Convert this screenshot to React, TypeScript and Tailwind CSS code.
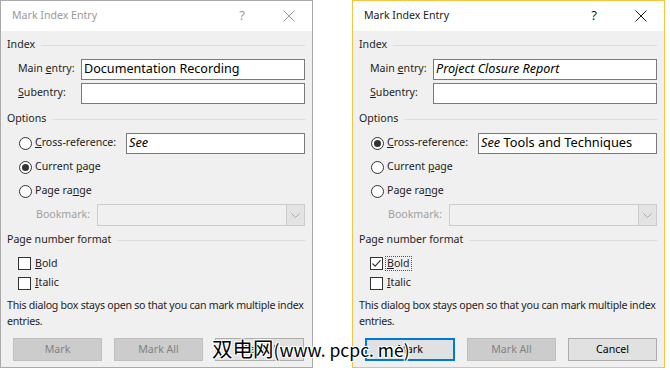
import type { ReactNode } from 'react';

type DialogProps = {
  active: boolean;
  mainEntry: ReactNode;
  crossRef: ReactNode;
  selected: 'cross' | 'current' | 'range';
  bold: boolean;
};

const GroupHeader = ({ label }: { label: string }) => (
  <div className="flex h-[16px] items-center gap-[6px] pl-[6px] pr-[7px]">
    <span className="text-[#1e1e1e]">{label}</span>
    <div className="h-px flex-1 bg-[#dcdcdc]" />
  </div>
);

const Radio = ({ on }: { on: boolean }) => (
  <span className="flex h-[13px] w-[13px] shrink-0 items-center justify-center rounded-full border border-[#333] bg-white">
    {on && <span className="h-[7px] w-[7px] rounded-full bg-[#333]" />}
  </span>
);

const Checkbox = ({ on }: { on: boolean }) => (
  <span className="flex h-[13px] w-[13px] shrink-0 items-center justify-center border border-[#333] bg-white">
    {on && (
      <svg width="11" height="11" viewBox="0 0 11 11" fill="none">
        <path d="M1.5 5.5 L4.2 8.2 L9.5 2.2" stroke="#333" strokeWidth="1.1" />
      </svg>
    )}
  </span>
);

const Dialog = ({ active, mainEntry, crossRef, selected, bold }: DialogProps) => {
  const btnDisabled = 'flex h-[23px] w-[89px] items-center justify-center border border-[#bfbfbf] bg-[#cccccc] text-[#838383]';
  return (
    <div
      className={`flex w-[313px] shrink-0 flex-col border ${active ? 'border-[#f4c542]' : 'border-[#aaaaaa]'}`}
    >
      {/* Title bar */}
      <div className="flex h-[30px] items-center bg-white">
        <span className={`pl-[11px] text-[10.6px] ${active ? 'text-[#1a1a1a]' : 'text-[#999999]'}`}>Mark Index Entry</span>
        <span className={`ml-auto mr-[38px] text-[13px] ${active ? 'text-[#1a1a1a]' : 'text-[#999999]'}`}>?</span>
        <svg className="mr-[17px]" width="12" height="12" viewBox="0 0 12 12">
          <path d="M0.5 0.5 L11.5 11.5 M11.5 0.5 L0.5 11.5" stroke={active ? '#1a1a1a' : '#999999'} strokeWidth="1" />
        </svg>
      </div>

      {/* Body */}
      <div className="flex flex-1 flex-col bg-[#f0f0f0] pt-[6px] text-[10.6px] text-[#1e1e1e]">
        <GroupHeader label="Index" />
        <div className="mt-[4px] flex h-[24px] items-center pl-[17px] pr-[7px]">
          <span className="w-[63px]">Main <u>e</u>ntry:</span>
          <div className="flex h-[21px] flex-1 items-center border border-[#7a7a7a] bg-white pl-[2px] text-[12.6px] text-black">
            {mainEntry}
          </div>
        </div>
        <div className="flex h-[24px] items-center pl-[17px] pr-[7px]">
          <span className="w-[63px]"><u>S</u>ubentry:</span>
          <div className="h-[21px] flex-1 border border-[#7a7a7a] bg-white" />
        </div>

        <div className="mt-[6px]">
          <GroupHeader label="Options" />
        </div>
        <div className="mt-[4px] flex h-[24px] items-center pl-[18px] pr-[7px]">
          <Radio on={selected === 'cross'} />
          <span className="ml-[3px] w-[91px]"><u>C</u>ross-reference:</span>
          <div className="flex h-[21px] flex-1 items-center border border-[#7a7a7a] bg-white pl-[2px] text-[12.8px] text-black">
            {crossRef}
          </div>
        </div>
        <div className="flex h-[24px] items-center pl-[18px]">
          <Radio on={selected === 'current'} />
          <span className="ml-[3px]">Current <u>p</u>age</span>
        </div>
        <div className="flex h-[24px] items-center pl-[18px]">
          <Radio on={selected === 'range'} />
          <span className="ml-[3px]">Page ra<u>n</u>ge</span>
        </div>
        <div className="flex h-[24px] items-center pl-[35px] pr-[7px]">
          <span className="w-[61px] text-[#a0a0a0]">Bookmark:</span>
          <div className="flex h-[22px] flex-1 border border-[#cccccc] bg-[#f0f0f0]">
            <div className="flex-1" />
            <div className="flex w-[18px] items-center justify-center border-l border-[#cccccc] bg-[#e3e3e3]">
              <svg width="9" height="5" viewBox="0 0 9 5">
                <path d="M0.5 0.5 L4.5 4.5 L8.5 0.5" stroke="#a8a8a8" fill="none" />
              </svg>
            </div>
          </div>
        </div>

        <div className="mt-[5px]">
          <GroupHeader label="Page number format" />
        </div>
        <div className="mt-[5px] flex h-[20px] items-center pl-[17px]">
          <Checkbox on={bold} />
          <span className={`ml-[3px] px-px leading-[13px] ${bold ? 'outline outline-1 outline-dotted outline-[#555]' : ''}`}>
            <u>B</u>old
          </span>
        </div>
        <div className="flex h-[20px] items-center pl-[17px]">
          <Checkbox on={false} />
          <span className="ml-[4px]"><u>I</u>talic</span>
        </div>

        <p className="mt-[4px] whitespace-nowrap pl-[6px] leading-[16px] tracking-[-0.25px]">
          This dialog box stays open so that you can mark multiple index
          <br />
          entries.
        </p>

        <div className="mt-[9px] mb-[6px] flex gap-[12px] pl-[12px]">
          {active ? (
            <div className="flex h-[23px] w-[90px] items-center justify-center border-2 border-[#0078d7] bg-[#e1e1e1] text-black">Mark</div>
          ) : (
            <div className={btnDisabled}>Mark</div>
          )}
          <div className={btnDisabled}>Mark All</div>
          <div className="flex h-[23px] w-[89px] items-center justify-center border border-[#adadad] bg-[#e1e1e1] text-black">Cancel</div>
        </div>
      </div>
    </div>
  );
};

export default function App() {
  return (
    <div className="relative h-[370px] w-[670px] overflow-hidden bg-white font-['Segoe_UI','Noto_Sans',sans-serif]">
      <div className="flex h-[368px] gap-[39px]">
        <Dialog
          active={false}
          mainEntry="Documentation Recording"
          crossRef={<i>See</i>}
          selected="current"
          bold={false}
        />
        <Dialog
          active={true}
          mainEntry={<i>Project Closure Report</i>}
          crossRef={
            <span>
              <i>See</i> Tools and Techniques
            </span>
          }
          selected="cross"
          bold={true}
        />
      </div>

      {/* watermark */}
      <div
        className="absolute left-[212px] top-[335px] flex items-baseline whitespace-nowrap font-['Noto_Sans_CJK_SC',sans-serif] leading-[26px] text-black [text-shadow:0_0_2px_#fff,0_0_2px_#fff,1px_1px_0_#fff,-1px_-1px_0_#fff,1px_-1px_0_#fff,-1px_1px_0_#fff]"
      >
        <span className="text-[20.5px]">双电网</span>
        <span className="text-[17.5px]">(www. pcpc. me)</span>
      </div>
    </div>
  );
}
